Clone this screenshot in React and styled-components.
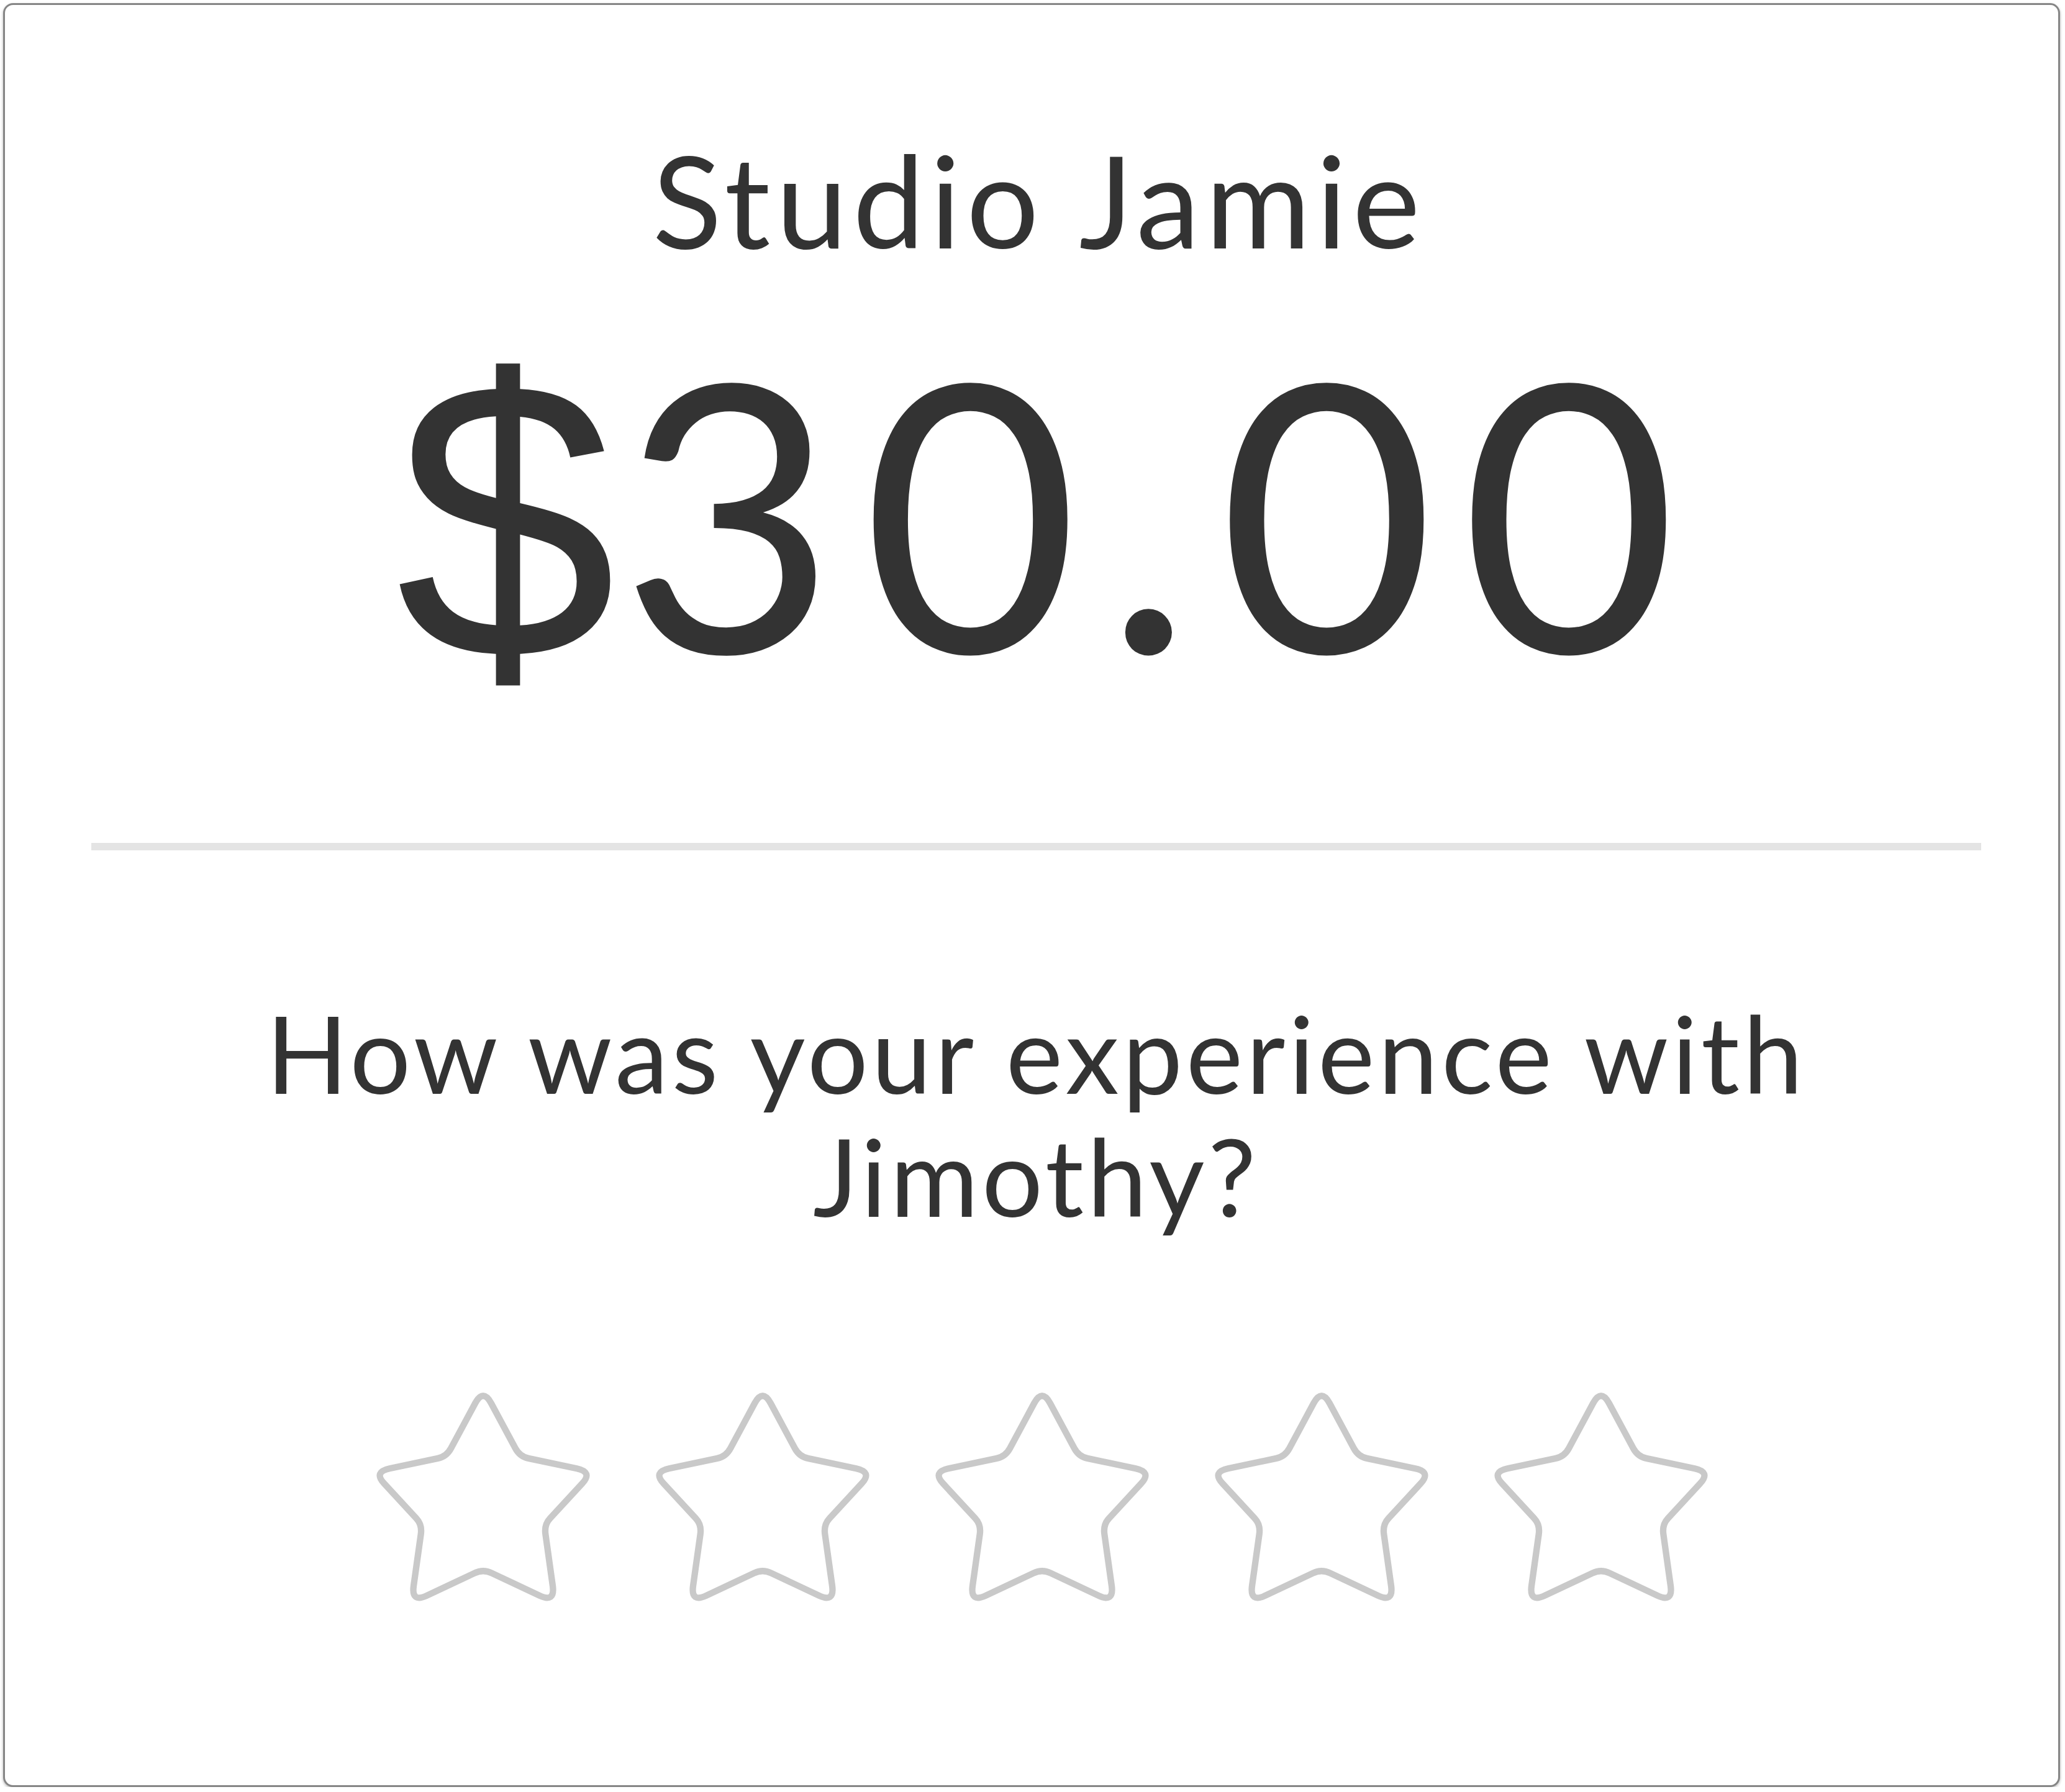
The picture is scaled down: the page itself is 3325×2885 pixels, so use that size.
import React from 'react';
import styled, { createGlobalStyle } from 'styled-components';

const GlobalStyle = createGlobalStyle`
  html, body {
    margin: 0;
    padding: 0;
    background: #fff;
  }
`;

const Card = styled.div`
  box-sizing: border-box;
  width: 3312px;
  height: 2872px;
  margin: 5px 0 0 5px;
  padding: 210px 124px 0 139px;
  border: 3px solid #858585;
  border-radius: 16px;
  box-shadow: 0 2px 4px rgba(0, 0, 0, 0.3);
  background: #fff;
  display: flex;
  flex-direction: column;
  align-items: center;
  font-family: Lato, "Open Sans", sans-serif;
  color: #333;
`;

const Merchant = styled.div`
  font-size: 206px;
  line-height: 206px;
  letter-spacing: 9px;
  padding-left: 9px;
  font-weight: 400;
`;

const Amount = styled.div`
  margin-top: 95px;
  padding-left: 42px;
  font-size: 600px;
  line-height: 600px;
  letter-spacing: 42px;
  font-weight: 400;
`;

const Dollar = styled.span`
  font-family: "Liberation Sans", Arial, sans-serif;
  font-size: 640px;
  line-height: 0;
  vertical-align: -8px;
  letter-spacing: 6px;
`;

const Divider = styled.hr`
  align-self: stretch;
  height: 12px;
  margin: 238px 0 0;
  border: 0;
  background: #e4e4e4;
`;

const Question = styled.p`
  margin: 226px 0 0;
  max-width: 2800px;
  font-size: 173px;
  line-height: 198px;
  letter-spacing: 5.5px;
  text-align: center;
`;

const Stars = styled.div`
  display: flex;
  gap: 84px;
  margin-top: 238px;
  margin-left: 18px;
`;

const StarSvg = styled.svg`
  width: 366px;
  height: 358px;
  display: block;
`;

// outline of the star, outer tips and inner corners
const starPoints = [
  [177, 6], [234, 112], [348, 136], [272, 218], [289, 340],
  [177, 287], [65, 340], [82, 218], [6, 136], [120, 112],
];

const roundedPath = (pts) => {
  const n = pts.length;
  let d = '';
  pts.forEach((p, i) => {
    const prev = pts[(i - 1 + n) % n];
    const next = pts[(i + 1) % n];
    const t = i % 2 === 0 ? 0.22 : 0.12;
    const a = [p[0] + (prev[0] - p[0]) * t, p[1] + (prev[1] - p[1]) * t];
    const b = [p[0] + (next[0] - p[0]) * t, p[1] + (next[1] - p[1]) * t];
    d += `${i === 0 ? 'M' : 'L'}${a[0].toFixed(1)} ${a[1].toFixed(1)} Q${p[0]} ${p[1]} ${b[0].toFixed(1)} ${b[1].toFixed(1)} `;
  });
  return d + 'Z';
};

const starPath = roundedPath(starPoints);

const StarIcon = () => (
  <StarSvg viewBox="0 0 354 346" preserveAspectRatio="none">
    <path
      d={starPath}
      fill="none"
      stroke="#c9c9c9"
      strokeWidth="10"
      strokeLinejoin="round"
    />
  </StarSvg>
);

const App = () => {
  return (
    <>
      <GlobalStyle />
      <Card>
        <Merchant>Studio Jamie</Merchant>
        <Amount>
          <Dollar>$</Dollar>30.00
        </Amount>
        <Divider />
        <Question>
          How was your experience with
          <br />
          Jimothy?
        </Question>
        <Stars>
          {[1, 2, 3, 4, 5].map((n) => (
            <StarIcon key={n} />
          ))}
        </Stars>
      </Card>
    </>
  );
};

export default App;
